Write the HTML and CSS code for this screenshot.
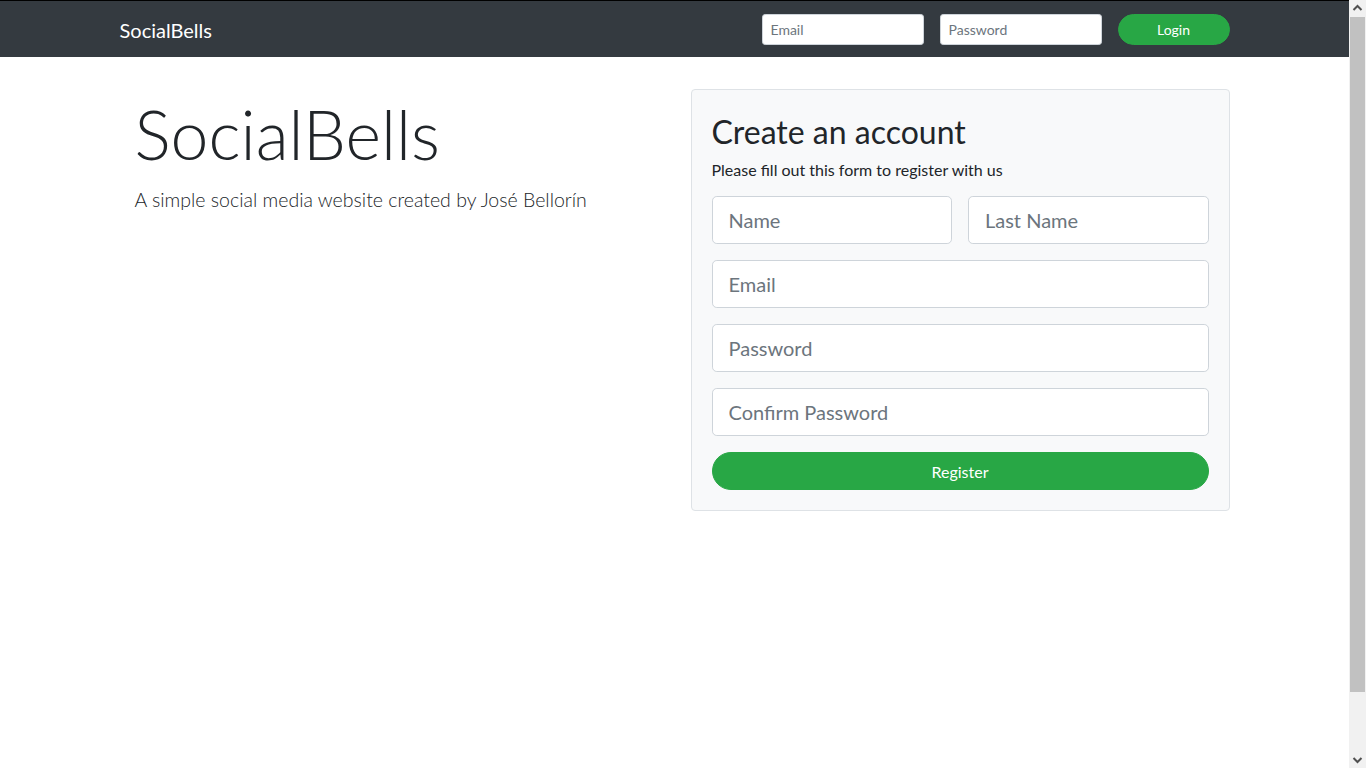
FILE: index.html
```html
<!DOCTYPE html>
<html lang="en">
<head>
<meta charset="utf-8">
<title>SocialBells</title>
<link rel="stylesheet" href="styles.css">
</head>
<body>
<div class="page">
  <nav class="navbar">
    <div class="container nav-inner">
      <a class="brand" href="#">SocialBells</a>
      <form class="login-form">
        <input class="input-sm" type="email" placeholder="Email">
        <input class="input-sm" type="password" placeholder="Password">
        <button class="btn btn-login" type="button">Login</button>
      </form>
    </div>
  </nav>

  <main class="container main">
    <div class="row">
      <section class="intro">
        <h1 class="display">SocialBells</h1>
        <p class="lead">A simple social media website created by José Bellorín</p>
      </section>
      <section class="col-form">
        <div class="card">
          <h2 class="card-title">Create an account</h2>
          <p class="card-sub">Please fill out this form to register with us</p>
          <form class="register">
            <div class="pair">
              <input class="input-lg" type="text" placeholder="Name">
              <input class="input-lg" type="text" placeholder="Last Name">
            </div>
            <input class="input-lg" type="email" placeholder="Email">
            <input class="input-lg" type="password" placeholder="Password">
            <input class="input-lg" type="password" placeholder="Confirm Password">
            <button class="btn btn-register" type="button">Register</button>
          </form>
        </div>
      </section>
    </div>
  </main>
</div>

<div class="scrollbar" aria-hidden="true">
  <div class="sb-arrow">
    <svg width="17" height="17" viewBox="0 0 17 17"><path d="M4.5 10 L8.5 6 L12.5 10" fill="none" stroke="#505050" stroke-width="2"/></svg>
  </div>
  <div class="sb-track"><div class="sb-thumb"></div></div>
  <div class="sb-arrow">
    <svg width="17" height="17" viewBox="0 0 17 17"><path d="M4.5 7 L8.5 11 L12.5 7" fill="none" stroke="#505050" stroke-width="2"/></svg>
  </div>
</div>
</body>
</html>
```
FILE: styles.css
```css
* { box-sizing: border-box; }

html, body {
  margin: 0;
  height: 100%;
  overflow: hidden;
}

body {
  font-family: Lato, "Noto Sans", sans-serif;
  font-size: 16px;
  line-height: 1.5;
  color: #212529;
  background: #fff;
}

.page {
  margin-right: 17px;
  border-top: 1px solid #000;
}

.container {
  max-width: 1140px;
  margin: 0 auto;
  padding: 0 15px;
}

/* navbar */
.navbar {
  background: #343a40;
  height: 56px;
}

.nav-inner {
  height: 100%;
  display: flex;
  align-items: center;
  justify-content: space-between;
}

.brand {
  color: #fff;
  text-decoration: none;
  font-size: 20px;
  line-height: 30px;
  margin-top: 2px;
}

.login-form {
  display: flex;
  align-items: center;
  gap: 16px;
}

.input-sm {
  width: 162px;
  height: 31px;
  padding: 4px 8px;
  font-family: inherit;
  font-size: 14px;
  color: #495057;
  background: #fff;
  border: 1px solid #ced4da;
  border-radius: 3.2px;
  outline: none;
}

.input-sm::placeholder,
.input-lg::placeholder {
  color: #6c757d;
  opacity: 1;
}

.btn {
  font-family: inherit;
  color: #fff;
  background: #28a745;
  border: 1px solid #28a745;
  border-radius: 50rem;
  cursor: pointer;
}

.btn-login {
  width: 112px;
  height: 31px;
  font-size: 14px;
  padding: 0;
}

/* main */
.main {
  margin-top: 32px;
}

.row {
  display: flex;
  margin: 0 -15px;
}

.intro {
  flex: 0 0 50%;
  padding: 2px 15px 0 30px;
}

.display {
  margin: 0 0 8px;
  font-size: 68px;
  font-weight: 300;
  line-height: 86.4px;
}

.lead {
  margin: 0;
  font-size: 19.5px;
  font-weight: 300;
  line-height: 30px;
}

.col-form {
  flex: 0 0 50%;
  padding: 0 15px 0 16px;
}

.card {
  background: #f8f9fa;
  border: 1px solid #dee2e6;
  border-radius: 4px;
  padding: 20px;
}

.card-title {
  margin: 0 0 7px;
  padding-top: 3px;
  font-size: 32px;
  font-weight: 400;
  line-height: 38px;
}

.card-sub {
  margin: 0 0 14px;
  font-size: 16px;
  line-height: 24px;
}

.register {
  display: flex;
  flex-direction: column;
  gap: 16px;
}

.pair {
  display: grid;
  grid-template-columns: 1fr 1fr;
  gap: 16px;
}

.input-lg {
  width: 100%;
  height: 48px;
  padding: 8px 16px;
  font-family: inherit;
  font-size: 20px;
  color: #495057;
  background: #fff;
  border: 1px solid #ced4da;
  border-radius: 4.8px;
  outline: none;
}

.btn-register {
  width: 100%;
  height: 38px;
  font-size: 16px;
  padding: 0;
}

/* fake window scrollbar */
.scrollbar {
  position: fixed;
  top: 0;
  right: 0;
  width: 17px;
  height: 100vh;
  background: #f1f1f1;
  display: flex;
  flex-direction: column;
}

.sb-arrow {
  height: 17px;
  flex: 0 0 17px;
}

.sb-arrow svg { display: block; }

.sb-track {
  flex: 1;
}

.sb-thumb {
  height: 675px;
  margin: 0 1px 0 1px;
  background: #c1c1c1;
}
```
